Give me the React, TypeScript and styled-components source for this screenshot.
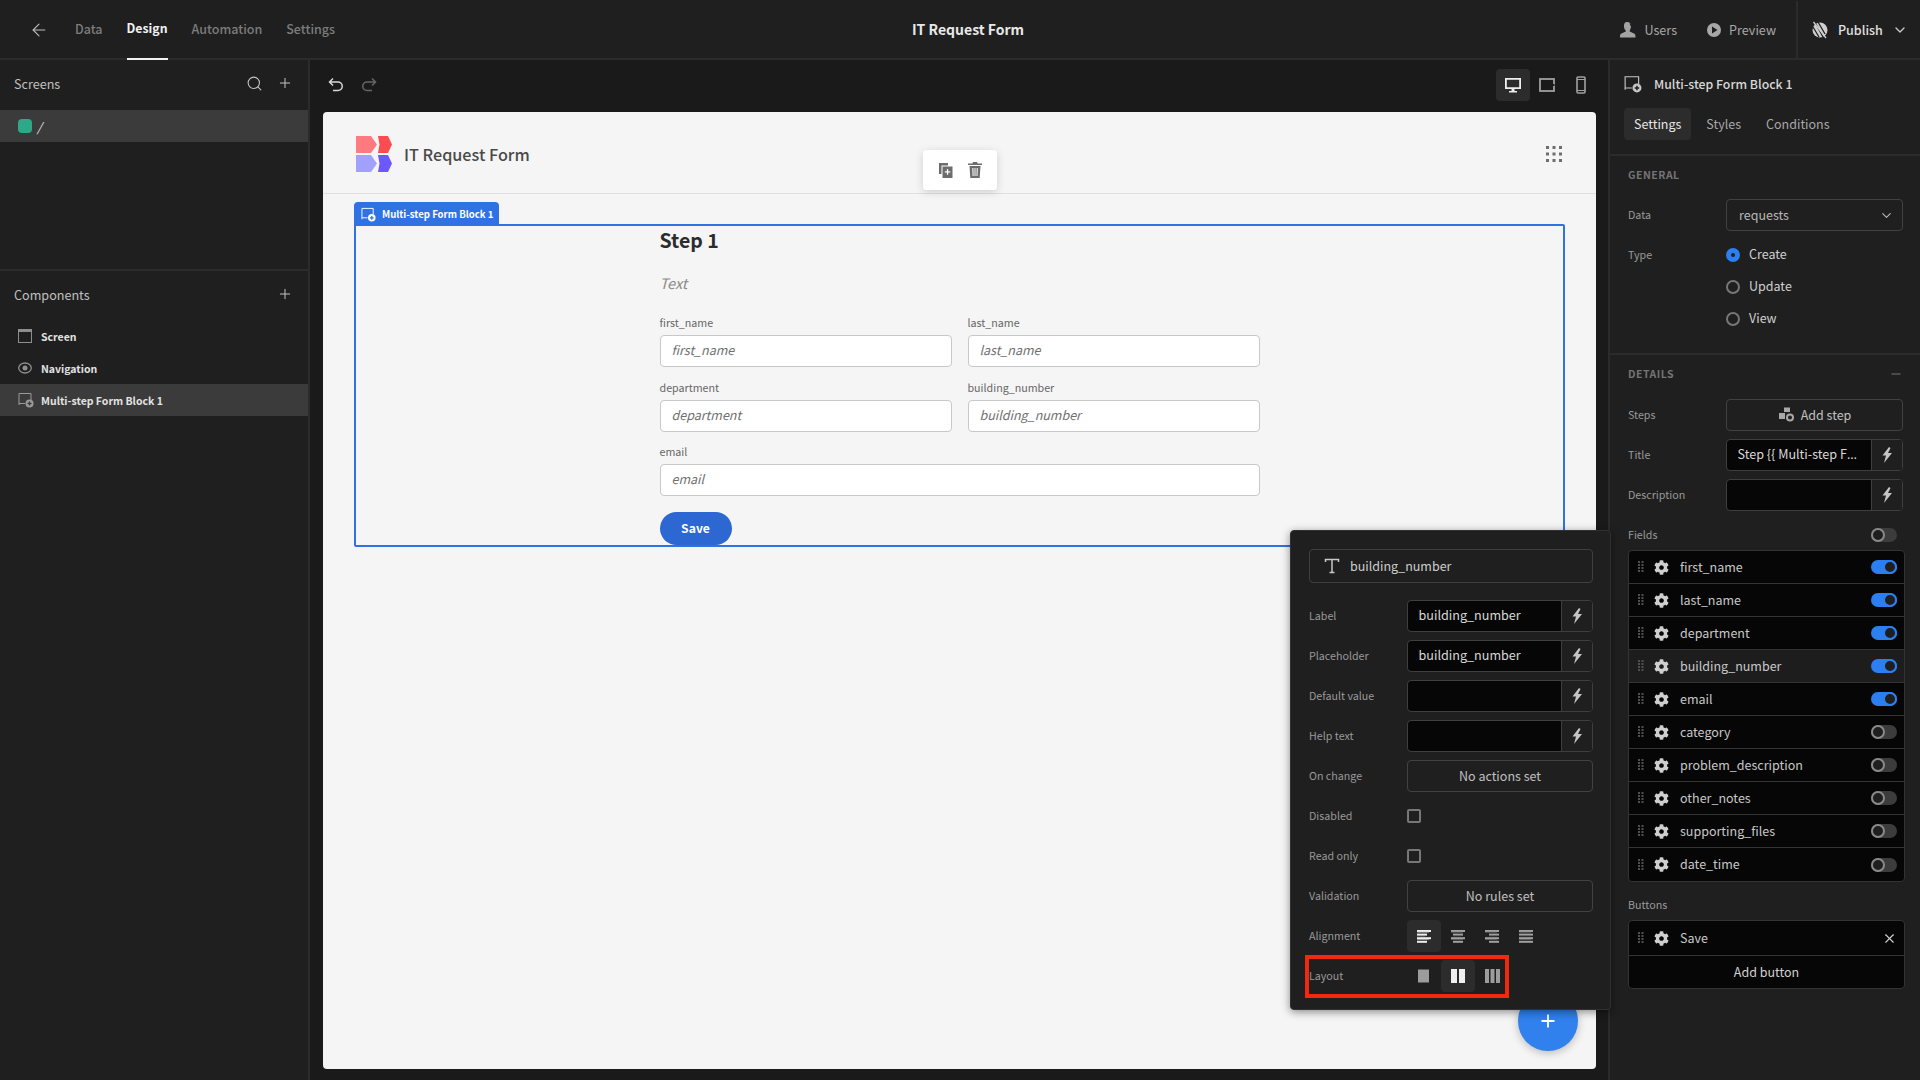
import React from "react";
import styled, { createGlobalStyle, css } from "styled-components";
import { FaCog } from "react-icons/fa";
import { ArrowLeft, Search, Plus, ChevronDown, X, Minus } from "lucide-react";

const Global = createGlobalStyle`
  * { box-sizing: border-box; }
  html, body { margin: 0; padding: 0; background: #1a1a1a; }
  body { font-family: "Noto Sans CJK SC", "Source Sans Pro", "Noto Sans", sans-serif; }
`;

const Page = styled.div`
  position: relative; width: 1920px; height: 1080px; overflow: hidden;
  display: flex; flex-direction: column; background: #1a1a1a; color: #d0d0d0; font-size: 12.5px;
`;
const TopBar = styled.header`
  height: 60px; flex: none; display: grid; grid-template-columns: 912px auto 1fr;
  background: #1f1f1f; border-bottom: 2px solid #2b2b2b;
`;
const TopLeft = styled.div`display: flex; align-items: center; padding-left: 29px;`;
const BackButton = styled.span`display: flex; width: 46px; color: #bdbdbd;`;
const NavTabs = styled.nav`display: flex; gap: 24px; height: 60px;`;
const NavTab = styled.span<{ $active?: boolean }>`
  display: flex; align-items: center; height: 60px; font-size: 12.5px; font-weight: 500; padding-bottom: 2px;
  color: ${p => (p.$active ? "#f2f2f2" : "#7c7c7c")};
  border-bottom: 2px solid ${p => (p.$active ? "#f2f2f2" : "transparent")};
  ${p => p.$active && css`font-weight: 700; font-size: 12.3px;`}
`;
const AppTitle = styled.h1`
  margin: 0; align-self: center; font-size: 14px; font-weight: 700; color: #e8e8e8; line-height: 20px; padding-bottom: 3px;
`;
const TopRight = styled.div`display: flex; justify-content: flex-end; align-items: center;`;
const TopAction = styled.span<{ $gap: number }>`
  display: flex; align-items: center; gap: 7px; margin-right: ${p => p.$gap}px; color: #a8a8a8; font-size: 12.6px; padding-bottom: 1px;
`;
const TopText = styled.span`padding-bottom: 1px;`;
const PublishBox = styled.div`
  height: 58px; width: 124px; display: flex; align-items: center; gap: 9px; padding-left: 13px;
  border-left: 2px solid #2b2b2b; color: #e0e0e0; font-weight: 500; font-size: 12.5px;
`;
const Main = styled.div`flex: 1; min-height: 0; display: grid; grid-template-columns: 310px 1fr 312px;`;

/* Left panel */
const LeftPanel = styled.aside`background: #1f1f1f; border-right: 2px solid #2b2b2b; display: flex; flex-direction: column;`;
const ScreensSection = styled.section`height: 211px; flex: none; border-bottom: 2px solid #2b2b2b;`;
const PanelHeader = styled.div<{ $h: number; $mb?: number; $pb?: number }>`
  height: ${p => p.$h}px; margin-bottom: ${p => p.$mb ?? 0}px; display: flex; align-items: center; justify-content: space-between;
  padding: 0 15px ${p => p.$pb ?? 0}px 14px; font-size: 12.6px; color: #c0c0c0;
`;
const HeaderIcons = styled.span`display: flex; align-items: center; gap: 14px; color: #c4c4c4;`;
const TreeRow = styled.div<{ $active?: boolean; $gap?: number }>`
  height: 32px; width: 308px; display: flex; align-items: center; padding-left: 18px; gap: ${p => p.$gap ?? 8}px;
  background: ${p => (p.$active ? "#3b3b3b" : "transparent")};
  font-size: 10.5px; font-weight: 700; color: #e2e2e2;
`;
const ScreenBadge = styled.span`width: 14px; height: 14px; border-radius: 4px; background: #2ea987;`;
const SlashText = styled.span`font-style: italic; font-weight: 400; font-size: 12.5px;`;
const TreeIcon = styled.span`display: flex; width: 15px; color: #9a9a9a;`;

/* Canvas */
const Canvas = styled.main`display: flex; flex-direction: column; padding: 0 12px 11px 13px; min-width: 0;`;
const CanvasTools = styled.div`height: 52px; flex: none; display: flex; align-items: center; justify-content: space-between; padding: 0 0 3px 5px; margin-right: -2px;`;
const UndoGroup = styled.div`display: flex; gap: 17px;`;
const DeviceGroup = styled.div`display: flex;`;
const DeviceButton = styled.span<{ $active?: boolean }>`
  width: 34px; height: 32px; display: flex; align-items: center; justify-content: center; border-radius: 4px;
  background: ${p => (p.$active ? "#2c2c2c" : "transparent")};
`;
const Card = styled.div`position: relative; flex: 1; background: #f5f5f5; border-radius: 4px; display: flex; flex-direction: column;`;
const CardHeader = styled.div`
  height: 82px; flex: none; border-bottom: 1px solid #e0e0e0; display: flex; align-items: center; padding: 3px 34px 0 33px; gap: 12px;
`;
const CardTitle = styled.div`flex: 1; font-size: 16.2px; font-weight: 500; color: #4a4a4a;`;
const Block = styled.div`
  position: relative; margin: 30px 31px 0; height: 323px; border: 2px solid #2f72e3; border-radius: 2px;
`;
const BlockTag = styled.div`
  position: absolute; left: -2px; top: -24px; width: 145px; height: 24px; padding-left: 7px; display: flex; align-items: center; gap: 6px;
  background: #2f72e3; color: #fff; font-size: 9.6px; font-weight: 700; border-radius: 4px 4px 0 0; white-space: nowrap;
`;
const FormWrap = styled.div`width: 600px; margin: 0 auto;`;
const StepTitle = styled.h2`margin: 0; font-size: 19.5px; line-height: 28px; font-weight: 700; color: #2c2c2c;`;
const StepText = styled.p`margin: 17px 0 20px; font-size: 14.5px; line-height: 24px; font-style: italic; color: #8a8a8a;`;
const FieldGrid = styled.div`display: grid; grid-template-columns: 1fr 1fr; column-gap: 16px; row-gap: 12.5px;`;
const FormField = styled.div<{ $wide?: boolean }>`${p => p.$wide && css`grid-column: 1 / 3;`}`;
const FormLabel = styled.div`font-size: 10.7px; line-height: 15px; margin-bottom: 5px; color: #666;`;
const FormInput = styled.div`
  height: 32px; background: #fff; border: 1px solid #c8c8c8; border-radius: 4px; padding: 0 11px 3px;
  display: flex; align-items: center; font-size: 12.5px; font-style: italic; color: #6f6f6f;
`;
const SaveButton = styled.div`
  margin-top: 16px; width: 72px; height: 33px; border-radius: 17px; background: #2c67d2; color: #fff; padding-bottom: 2px;
  display: flex; align-items: center; justify-content: center; font-size: 12.2px; font-weight: 700;
`;
const FloatTools = styled.div`
  position: absolute; left: 600px; top: 38px; width: 74px; height: 40px; background: #fff; border-radius: 3px;
  box-shadow: 0 2px 8px rgba(0,0,0,.16); display: flex; align-items: center; justify-content: center; gap: 14px; color: #666;
`;
const Fab = styled.div`
  position: absolute; right: 18px; bottom: 18px; width: 60px; height: 60px; border-radius: 50%; background: #3080ee; color: #fff;
  display: flex; align-items: center; justify-content: center; box-shadow: 0 2px 8px rgba(0,0,0,.25);
`;

/* Right panel */
const RightPanel = styled.aside`background: #1f1f1f; border-left: 2px solid #2b2b2b; display: flex; flex-direction: column;`;
const InspectorHead = styled.div`height: 96px; flex: none; border-bottom: 2px solid #2b2b2b; padding: 0 14px;`;
const InspectorTitle = styled.div`height: 48px; display: flex; align-items: center; gap: 12px; font-size: 12.3px; font-weight: 500; color: #d8d8d8;`;
const TabRow = styled.div`display: flex;`;
const InspectorTab = styled.span<{ $active?: boolean }>`
  height: 32px; display: flex; align-items: center; padding: 0 10px 1px; margin-right: 5px; border-radius: 4px;
  background: ${p => (p.$active ? "#2c2c2c" : "transparent")}; color: ${p => (p.$active ? "#e6e6e6" : "#a8a8a8")}; font-size: 12.5px;
`;
const SectionGeneral = styled.section`height: 199px; flex: none; padding: 11px 17px 0 18px; border-bottom: 2px solid #2b2b2b;`;
const SectionDetails = styled.section`flex: 1; padding: 11px 17px 0 18px;`;
const SectionHeading = styled.div<{ $mb?: number }>`
  height: 16px; line-height: 16px; margin-bottom: ${p => p.$mb ?? 16}px; display: flex; align-items: center; justify-content: space-between;
  font-size: 10.5px; font-weight: 700; letter-spacing: .5px; color: #747474; text-transform: uppercase;
`;
const ControlRow = styled.div`display: grid; grid-template-columns: 98px 1fr; align-items: center; min-height: 32px; margin-bottom: 8px;`;
const RadioRows = styled.div`display: flex; flex-direction: column;`;
const ControlLabel = styled.div<{ $top?: boolean }>`font-size: 10.7px; color: #9a9a9a; padding-bottom: 1px; ${p => p.$top && css`align-self: start; line-height: 32px;`}`;
const SelectBox = styled.div`
  height: 32px; border: 1px solid #424242; border-radius: 4px; display: flex; align-items: center; justify-content: space-between;
  padding: 0 8px 0 12px; font-size: 12.5px; color: #b8b8b8;
`;
const SelectText = styled.span`padding-bottom: 2px;`;
const RadioRow = styled.div`height: 32px; display: flex; align-items: center; gap: 9px; font-size: 12.5px; color: #d0d0d0;`;
const RadioText = styled.span`padding-bottom: 3px;`;
const RadioDot = styled.span<{ $on?: boolean }>`
  width: 14px; height: 14px; border-radius: 50%; background: #1f1f1f;
  border: ${p => (p.$on ? "5px solid #2b7ff0" : "2px solid #777")};
`;
const OutlineButton = styled.div`
  height: 32px; border: 1px solid #424242; border-radius: 4px; display: flex; align-items: center; justify-content: center; gap: 7px;
  font-size: 12.5px; color: #c0c0c0; padding-bottom: 2px;
`;
const BindInput = styled.div`
  height: 32px; display: flex; border: 1px solid #3f3f3f; border-radius: 4px; overflow: hidden; background: #060606;
`;
const BindValue = styled.div`
  flex: 1; min-width: 0; padding: 0 10.5px; line-height: 28px; font-size: 12.6px; color: #d8d8d8; white-space: nowrap;
`;
const EllipsisMark = styled.span`font-family: "Noto Sans", sans-serif;`;
const BindBolt = styled.span`width: 31px; flex: none; display: flex; align-items: center; justify-content: center; background: #1f1f1f; border-left: 1px solid #3f3f3f;`;
const FieldsHeader = styled.div`height: 31px; display: flex; align-items: center; justify-content: space-between; padding: 0 6px 0 0; font-size: 10.7px; color: #9a9a9a;`;
const ListBox = styled.div`width: 277px; border: 1px solid #333; border-radius: 4px; background: #060606; overflow: hidden;`;
const ListRow = styled.div<{ $sel?: boolean; $h?: number }>`
  height: ${p => p.$h ?? 33}px; display: flex; align-items: center; padding: 0 7px 0 9px; border-bottom: 1px solid #333;
  background: ${p => (p.$sel ? "#1d1d1d" : "transparent")};
  &:last-child { border-bottom: 0; }
`;
const RowName = styled.span`flex: 1; margin-left: 11px; font-size: 12.5px; color: #c8c8c8; padding-bottom: 2px;`;
const GearWrap = styled.span`display: flex; margin-left: 10px; color: #cfcfcf;`;
const ToggleTrack = styled.span<{ $on?: boolean }>`
  position: relative; width: 26px; height: 14px; border-radius: 7px; background: ${p => (p.$on ? "#2b7ff0" : "#3c3c3c")};
`;
const ToggleThumb = styled.span<{ $on?: boolean }>`
  position: absolute; top: 0; left: ${p => (p.$on ? 12 : 0)}px; width: 14px; height: 14px; border-radius: 50%;
  background: #1f1f1f; border: 2px solid ${p => (p.$on ? "#2b7ff0" : "#8a8a8a")};
`;
const ButtonsLabel = styled.div`margin: 15px 0 7px; line-height: 16px; font-size: 10.7px; color: #9a9a9a;`;
const AddButtonRow = styled.div`height: 32px; display: flex; align-items: center; justify-content: center; font-size: 12.5px; color: #d0d0d0; padding-bottom: 2px;`;

/* Popover */
const Popover = styled.div`
  position: absolute; left: 1290px; top: 530px; width: 321px; height: 480px; padding: 18px 17px 18px 18px; background: #1f1f1f;
  border: 1px solid #303030; border-radius: 4px; box-shadow: 0 2px 8px rgba(0,0,0,.45);
`;
const FieldPill = styled.div`
  height: 34px; margin-bottom: 17px; border: 1px solid #3f3f3f; border-radius: 4px; display: flex; align-items: center; gap: 10px;
  padding: 0 0 1px 14px; font-size: 12.5px; color: #cdcdcd;
`;
const Checkbox = styled.span`width: 14px; height: 14px; border: 2px solid #777; border-radius: 2px;`;
const IconStrip = styled.div`display: flex;`;
const StripButton = styled.span<{ $active?: boolean }>`
  width: 34px; height: 32px; display: flex; align-items: center; justify-content: center; border-radius: 4px;
  background: ${p => (p.$active ? "#2c2c2c" : "transparent")};
`;
const Highlight = styled.div`
  position: absolute; left: 14px; top: 424px; width: 204px; height: 43px; border: 4px solid #f0290f;
`;

/* Icons */
const Svg = ({ s = 16, w, children, c }: { s?: number; w?: number; c?: string; children: React.ReactNode }) => (
  <svg width={w ?? s} height={s} viewBox={`0 0 ${w ?? s} ${s}`} style={{ display: "block", flex: "none", color: c }}>{children}</svg>
);
const BlockIcon = ({ c = "currentColor", s = 16, bg = "#1f1f1f" }: { c?: string; s?: number; bg?: string }) => (
  <svg width={s} height={s} viewBox="0 0 16 16" style={{ display: "block", flex: "none" }}>
    <path d="M1 13V1.5h12V8M1 11.5h6" fill="none" stroke={c} strokeWidth="1" />
    <circle cx="11.5" cy="11.5" r="4" fill={c} />
    <path d="M9.5 11.5h4M11.5 9.5v4" stroke={bg} strokeWidth="1.3" />
  </svg>
);
const Bolt = () => (
  <Svg s={16} w={12}><path d="M8 0 1.500 8.500h3.500L3 16l8-10H7L9.500 1z" fill="#c4c4c4" /></Svg>
);
const Logo = () => (
  <svg width="36" height="36" viewBox="0 0 36 36" style={{ display: "block", flex: "none" }}>
    <path d="M0 0h15l6 8.5-6 8.5H0z" fill="#fd7b7e" />
    <path d="M22 0h10l4 8.5-4 8.5H22l1.5-8.5z" fill="#fb4c4f" />
    <path d="M0 19h15l6 8.5-6 8.5H0z" fill="#a1a0fd" />
    <path d="M22 19h10l4 8.5-4 8.5H22l1.5-8.5z" fill="#6c58fd" />
  </svg>
);
const Dots9 = () => (
  <Svg s={16}>
    {[0, 6.5, 13].flatMap(x => [0, 6.5, 13].map(y => <rect key={`${x}${y}`} x={x} y={y} width="3" height="3" fill="#6e6e6e" />))}
  </Svg>
);
const Grip = () => (
  <Svg s={12} w={6}>
    {[0, 3.5].flatMap(x => [0, 3, 6, 9].map(y => <rect key={`${x}${y}`} x={x} y={y} width="2" height="2" fill="#505050" />))}
  </Svg>
);
const Gear = () => <GearWrap><FaCog size={15} /></GearWrap>;
const AlignIcon = ({ kind, on }: { kind: number; on?: boolean }) => {
  const rows = kind === 0 ? [[0, 14], [0, 10], [0, 14], [0, 10]] : kind === 1 ? [[0, 14], [2, 10], [0, 14], [2, 10]] : kind === 2 ? [[0, 14], [4, 10], [0, 14], [4, 10]] : [[0, 14], [0, 14], [0, 14], [0, 14]];
  return (
    <Svg s={14}>
      {rows.map(([x, w], i) => <rect key={i} x={x} y={1 + i * 3.6} width={w} height="2" fill={on ? "#eee" : "#a0a0a0"} />)}
      {rows.map(([x, w], i) => i < 3 ? <rect key={`m${i}`} x={x} y={2.8 + i * 3.6} width={Math.max(w - 2, 0)} height="0.8" fill={on ? "#aaa" : "#666"} /> : null)}
    </Svg>
  );
};

const fields: [string, boolean][] = [
  ["first_name", true], ["last_name", true], ["department", true], ["building_number", true], ["email", true],
  ["category", false], ["problem_description", false], ["other_notes", false], ["supporting_files", false], ["date_time", false],
];

const Toggle = ({ on }: { on?: boolean }) => <ToggleTrack $on={on}><ToggleThumb $on={on} /></ToggleTrack>;

export default function App() {
  return (
    <Page>
      <Global />
      <TopBar>
        <TopLeft>
          <BackButton><ArrowLeft size={20} strokeWidth={1.3} /></BackButton>
          <NavTabs>
            <NavTab>Data</NavTab>
            <NavTab $active>Design</NavTab>
            <NavTab>Automation</NavTab>
            <NavTab>Settings</NavTab>
          </NavTabs>
        </TopLeft>
        <AppTitle>IT Request Form</AppTitle>
        <TopRight>
          <TopAction $gap={29}>
            <Svg s={18}><path d="M8 1c3 0 4.500 2 4.200 5-.2 2-1 3.200-1.700 4 .4 1 3 1.700 5 2.800.8.5 1 1.500 1 3.700H1c0-2.200.2-3.200 1-3.700 2-1.100 4.600-1.800 5-2.800C6.300 9.200 5.300 8 5 6 4.700 3 5.500 1 8 1z" fill="#a4a4a4" /><path d="M11 2.500l1.500 3.500-1 4" stroke="#1f1f1f" strokeWidth="1" fill="none" /></Svg>
            <TopText>Users</TopText>
          </TopAction>
          <TopAction $gap={20}>
            <Svg s={16}><path fillRule="evenodd" d="M8 1a7 7 0 1 1 0 14A7 7 0 0 1 8 1zM6 4.500v7L11.500 8z" fill="#a8a8a8" /></Svg>
            <TopText>Preview</TopText>
          </TopAction>
          <PublishBox>
            <Svg s={18}>
              <circle cx="9" cy="9" r="7.500" fill="#cfcfcf" />
              <path d="M4 1.500 12 16M7 1 14 13M2 6l6 10" stroke="#1f1f1f" strokeWidth="1.300" />
              <path d="M2.500 1 15 17" stroke="#cfcfcf" strokeWidth="1.300" />
            </Svg>
            <TopText>Publish</TopText>
            <ChevronDown size={16} strokeWidth={2} style={{ color: "#c8c8c8" }} />
          </PublishBox>
        </TopRight>
      </TopBar>

      <Main>
        <LeftPanel>
          <ScreensSection>
            <PanelHeader $h={46} $mb={4}>
              Screens
              <HeaderIcons>
                <Search size={17} strokeWidth={1.500} />
                <Plus size={16} strokeWidth={1.500} />
              </HeaderIcons>
            </PanelHeader>
            <TreeRow $active $gap={5}><ScreenBadge /><SlashText>/</SlashText></TreeRow>
          </ScreensSection>
          <PanelHeader $h={49} $pb={3}>
            Components
            <HeaderIcons><Plus size={16} strokeWidth={1.500} /></HeaderIcons>
          </PanelHeader>
          <TreeRow>
            <TreeIcon><Svg s={14}><rect x="0.500" y="0.500" width="13" height="13" fill="none" stroke="#8e8e8e" /><rect x="0" y="0" width="14" height="3" fill="#8e8e8e" /></Svg></TreeIcon>
            Screen
          </TreeRow>
          <TreeRow>
            <TreeIcon><Svg s={14}><ellipse cx="7" cy="7" rx="6.300" ry="5" fill="none" stroke="#8e8e8e" strokeWidth="1.300" /><circle cx="7" cy="7" r="2.500" fill="#8e8e8e" /></Svg></TreeIcon>
            Navigation
          </TreeRow>
          <TreeRow $active>
            <TreeIcon><BlockIcon c="#9a9a9a" bg="#3b3b3b" /></TreeIcon>
            Multi-step Form Block 1
          </TreeRow>
        </LeftPanel>

        <Canvas>
          <CanvasTools>
            <UndoGroup>
              <Svg s={16}><path d="M5 1.500 1.500 5 5 8.500M2 5h8a4 4 0 0 1 0 8.500H5" fill="none" stroke="#d8d8d8" strokeWidth="1.500" /></Svg>
              <Svg s={16}><path d="M11 1.500 14.500 5 11 8.500M14 5H6a4 4 0 0 0 0 8.500h5" fill="none" stroke="#666" strokeWidth="1.500" /></Svg>
            </UndoGroup>
            <DeviceGroup>
              <DeviceButton $active>
                <Svg s={18}><path fillRule="evenodd" d="M1 2h16v11H1zM2.800 3.800v7.400h12.400V3.800z" fill="#eee" /><path d="M7.500 13h3v2H13v1.500H5V15h2.500z" fill="#eee" /></Svg>
              </DeviceButton>
              <DeviceButton>
                <Svg s={18}><rect x="2" y="3" width="14" height="12" fill="none" stroke="#a0a0a0" strokeWidth="1.800" /><rect x="14.500" y="8" width="2" height="2" fill="#1a1a1a" /></Svg>
              </DeviceButton>
              <DeviceButton>
                <Svg s={18} w={10}><rect x="1" y="1" width="8" height="16" rx="1" fill="none" stroke="#a0a0a0" strokeWidth="1.600" /><rect x="1" y="3" width="8" height="1" fill="#a0a0a0" /><rect x="1" y="14" width="8" height="1" fill="#a0a0a0" /></Svg>
              </DeviceButton>
            </DeviceGroup>
          </CanvasTools>
          <Card>
            <CardHeader>
              <Logo />
              <CardTitle>IT Request Form</CardTitle>
              <Dots9 />
            </CardHeader>
            <Block>
              <BlockTag><BlockIcon c="#fff" s={15} bg="#2f72e3" />Multi-step Form Block 1</BlockTag>
              <FormWrap>
                <StepTitle>Step 1</StepTitle>
                <StepText>Text</StepText>
                <FieldGrid>
                  <FormField><FormLabel>first_name</FormLabel><FormInput>first_name</FormInput></FormField>
                  <FormField><FormLabel>last_name</FormLabel><FormInput>last_name</FormInput></FormField>
                  <FormField><FormLabel>department</FormLabel><FormInput>department</FormInput></FormField>
                  <FormField><FormLabel>building_number</FormLabel><FormInput>building_number</FormInput></FormField>
                  <FormField $wide><FormLabel>email</FormLabel><FormInput>email</FormInput></FormField>
                </FieldGrid>
                <SaveButton>Save</SaveButton>
              </FormWrap>
            </Block>
            <FloatTools>
              <Svg s={15}><path d="M0 0h9v2.500H2.500V11H0z" fill="#6c6c6c" /><path fillRule="evenodd" d="M3.500 3.500h10V15h-10zM7.900 6v2.200H5.800v1.400h2.100v2.200h1.300V9.600h2.100V8.200H9.200V6z" fill="#6c6c6c" /></Svg>
              <Svg s={16} w={14}><path fillRule="evenodd" d="M5 0h4l.6 1.500H14V3H0V1.500h4.400zM1.500 4h11l-.8 12H2.300zM4.300 6l.3 8h1l-.2-8zM6.500 6v8h1V6zM8.700 6l-.2 8h1l.3-8z" fill="#6c6c6c" /></Svg>
            </FloatTools>
            <Fab><Plus size={20} strokeWidth={2.200} /></Fab>
          </Card>
        </Canvas>

        <RightPanel>
          <InspectorHead>
            <InspectorTitle><BlockIcon c="#c8c8c8" s={18} />Multi-step Form Block 1</InspectorTitle>
            <TabRow>
              <InspectorTab $active>Settings</InspectorTab>
              <InspectorTab>Styles</InspectorTab>
              <InspectorTab>Conditions</InspectorTab>
            </TabRow>
          </InspectorHead>
          <SectionGeneral>
            <SectionHeading>General</SectionHeading>
            <ControlRow>
              <ControlLabel>Data</ControlLabel>
              <SelectBox><SelectText>requests</SelectText><ChevronDown size={15} strokeWidth={1.800} /></SelectBox>
            </ControlRow>
            <ControlRow>
              <ControlLabel $top>Type</ControlLabel>
              <RadioRows>
                <RadioRow><RadioDot $on /><RadioText>Create</RadioText></RadioRow>
                <RadioRow><RadioDot /><RadioText>Update</RadioText></RadioRow>
                <RadioRow><RadioDot /><RadioText>View</RadioText></RadioRow>
              </RadioRows>
            </ControlRow>
          </SectionGeneral>
          <SectionDetails>
            <SectionHeading $mb={17}>Details<Minus size={14} color="#777" strokeWidth={2} /></SectionHeading>
            <ControlRow>
              <ControlLabel>Steps</ControlLabel>
              <OutlineButton>
                <Svg s={16}><rect x="1" y="7" width="6" height="6" fill="#a8a8a8" /><rect x="6" y="1.500" width="6" height="4.500" fill="#a8a8a8" /><circle cx="12" cy="11.500" r="3" fill="none" stroke="#a8a8a8" strokeWidth="2" /></Svg>
                Add step
              </OutlineButton>
            </ControlRow>
            <ControlRow>
              <ControlLabel>Title</ControlLabel>
              <BindInput><BindValue>{"Step {{ Multi-step F"}<EllipsisMark>…</EllipsisMark></BindValue><BindBolt><Bolt /></BindBolt></BindInput>
            </ControlRow>
            <ControlRow>
              <ControlLabel>Description</ControlLabel>
              <BindInput><BindValue /><BindBolt><Bolt /></BindBolt></BindInput>
            </ControlRow>
            <FieldsHeader>Fields<Toggle /></FieldsHeader>
            <ListBox>
              {fields.map(([name, on]) => (
                <ListRow key={name} $sel={name === "building_number"}>
                  <Grip /><Gear /><RowName>{name}</RowName><Toggle on={on} />
                </ListRow>
              ))}
            </ListBox>
            <ButtonsLabel>Buttons</ButtonsLabel>
            <ListBox>
              <ListRow $h={35}><Grip /><Gear /><RowName>Save</RowName><X size={15} color="#d0d0d0" strokeWidth={1.800} /></ListRow>
              <AddButtonRow>Add button</AddButtonRow>
            </ListBox>
          </SectionDetails>
        </RightPanel>
      </Main>

      <Popover>
        <FieldPill>
          <Svg s={16}><path d="M1.500 4V1.500h13V4M8 1.500v13M5.500 14.500h5" fill="none" stroke="#c8c8c8" strokeWidth="1.500" /></Svg>
          building_number
        </FieldPill>
        <ControlRow><ControlLabel>Label</ControlLabel><BindInput><BindValue>building_number</BindValue><BindBolt><Bolt /></BindBolt></BindInput></ControlRow>
        <ControlRow><ControlLabel>Placeholder</ControlLabel><BindInput><BindValue>building_number</BindValue><BindBolt><Bolt /></BindBolt></BindInput></ControlRow>
        <ControlRow><ControlLabel>Default value</ControlLabel><BindInput><BindValue /><BindBolt><Bolt /></BindBolt></BindInput></ControlRow>
        <ControlRow><ControlLabel>Help text</ControlLabel><BindInput><BindValue /><BindBolt><Bolt /></BindBolt></BindInput></ControlRow>
        <ControlRow><ControlLabel>On change</ControlLabel><OutlineButton>No actions set</OutlineButton></ControlRow>
        <ControlRow><ControlLabel>Disabled</ControlLabel><Checkbox /></ControlRow>
        <ControlRow><ControlLabel>Read only</ControlLabel><Checkbox /></ControlRow>
        <ControlRow><ControlLabel>Validation</ControlLabel><OutlineButton>No rules set</OutlineButton></ControlRow>
        <ControlRow>
          <ControlLabel>Alignment</ControlLabel>
          <IconStrip>
            <StripButton $active><AlignIcon kind={0} on /></StripButton>
            <StripButton><AlignIcon kind={1} /></StripButton>
            <StripButton><AlignIcon kind={2} /></StripButton>
            <StripButton><AlignIcon kind={3} /></StripButton>
          </IconStrip>
        </ControlRow>
        <ControlRow>
          <ControlLabel>Layout</ControlLabel>
          <IconStrip>
            <StripButton><Svg s={14} w={12}><rect x="0" y="0.500" width="11" height="13" fill="#9c9c9c" /></Svg></StripButton>
            <StripButton $active><Svg s={14}><rect x="0" y="0" width="6" height="14" fill="#f0f0f0" /><rect x="8" y="0" width="6" height="14" fill="#f0f0f0" /></Svg></StripButton>
            <StripButton><Svg s={14} w={15}><rect x="0" y="0" width="4" height="14" fill="#9c9c9c" /><rect x="5.500" y="0" width="4" height="14" fill="#9c9c9c" /><rect x="11" y="0" width="4" height="14" fill="#9c9c9c" /></Svg></StripButton>
          </IconStrip>
        </ControlRow>
        <Highlight />
      </Popover>
    </Page>
  );
}
